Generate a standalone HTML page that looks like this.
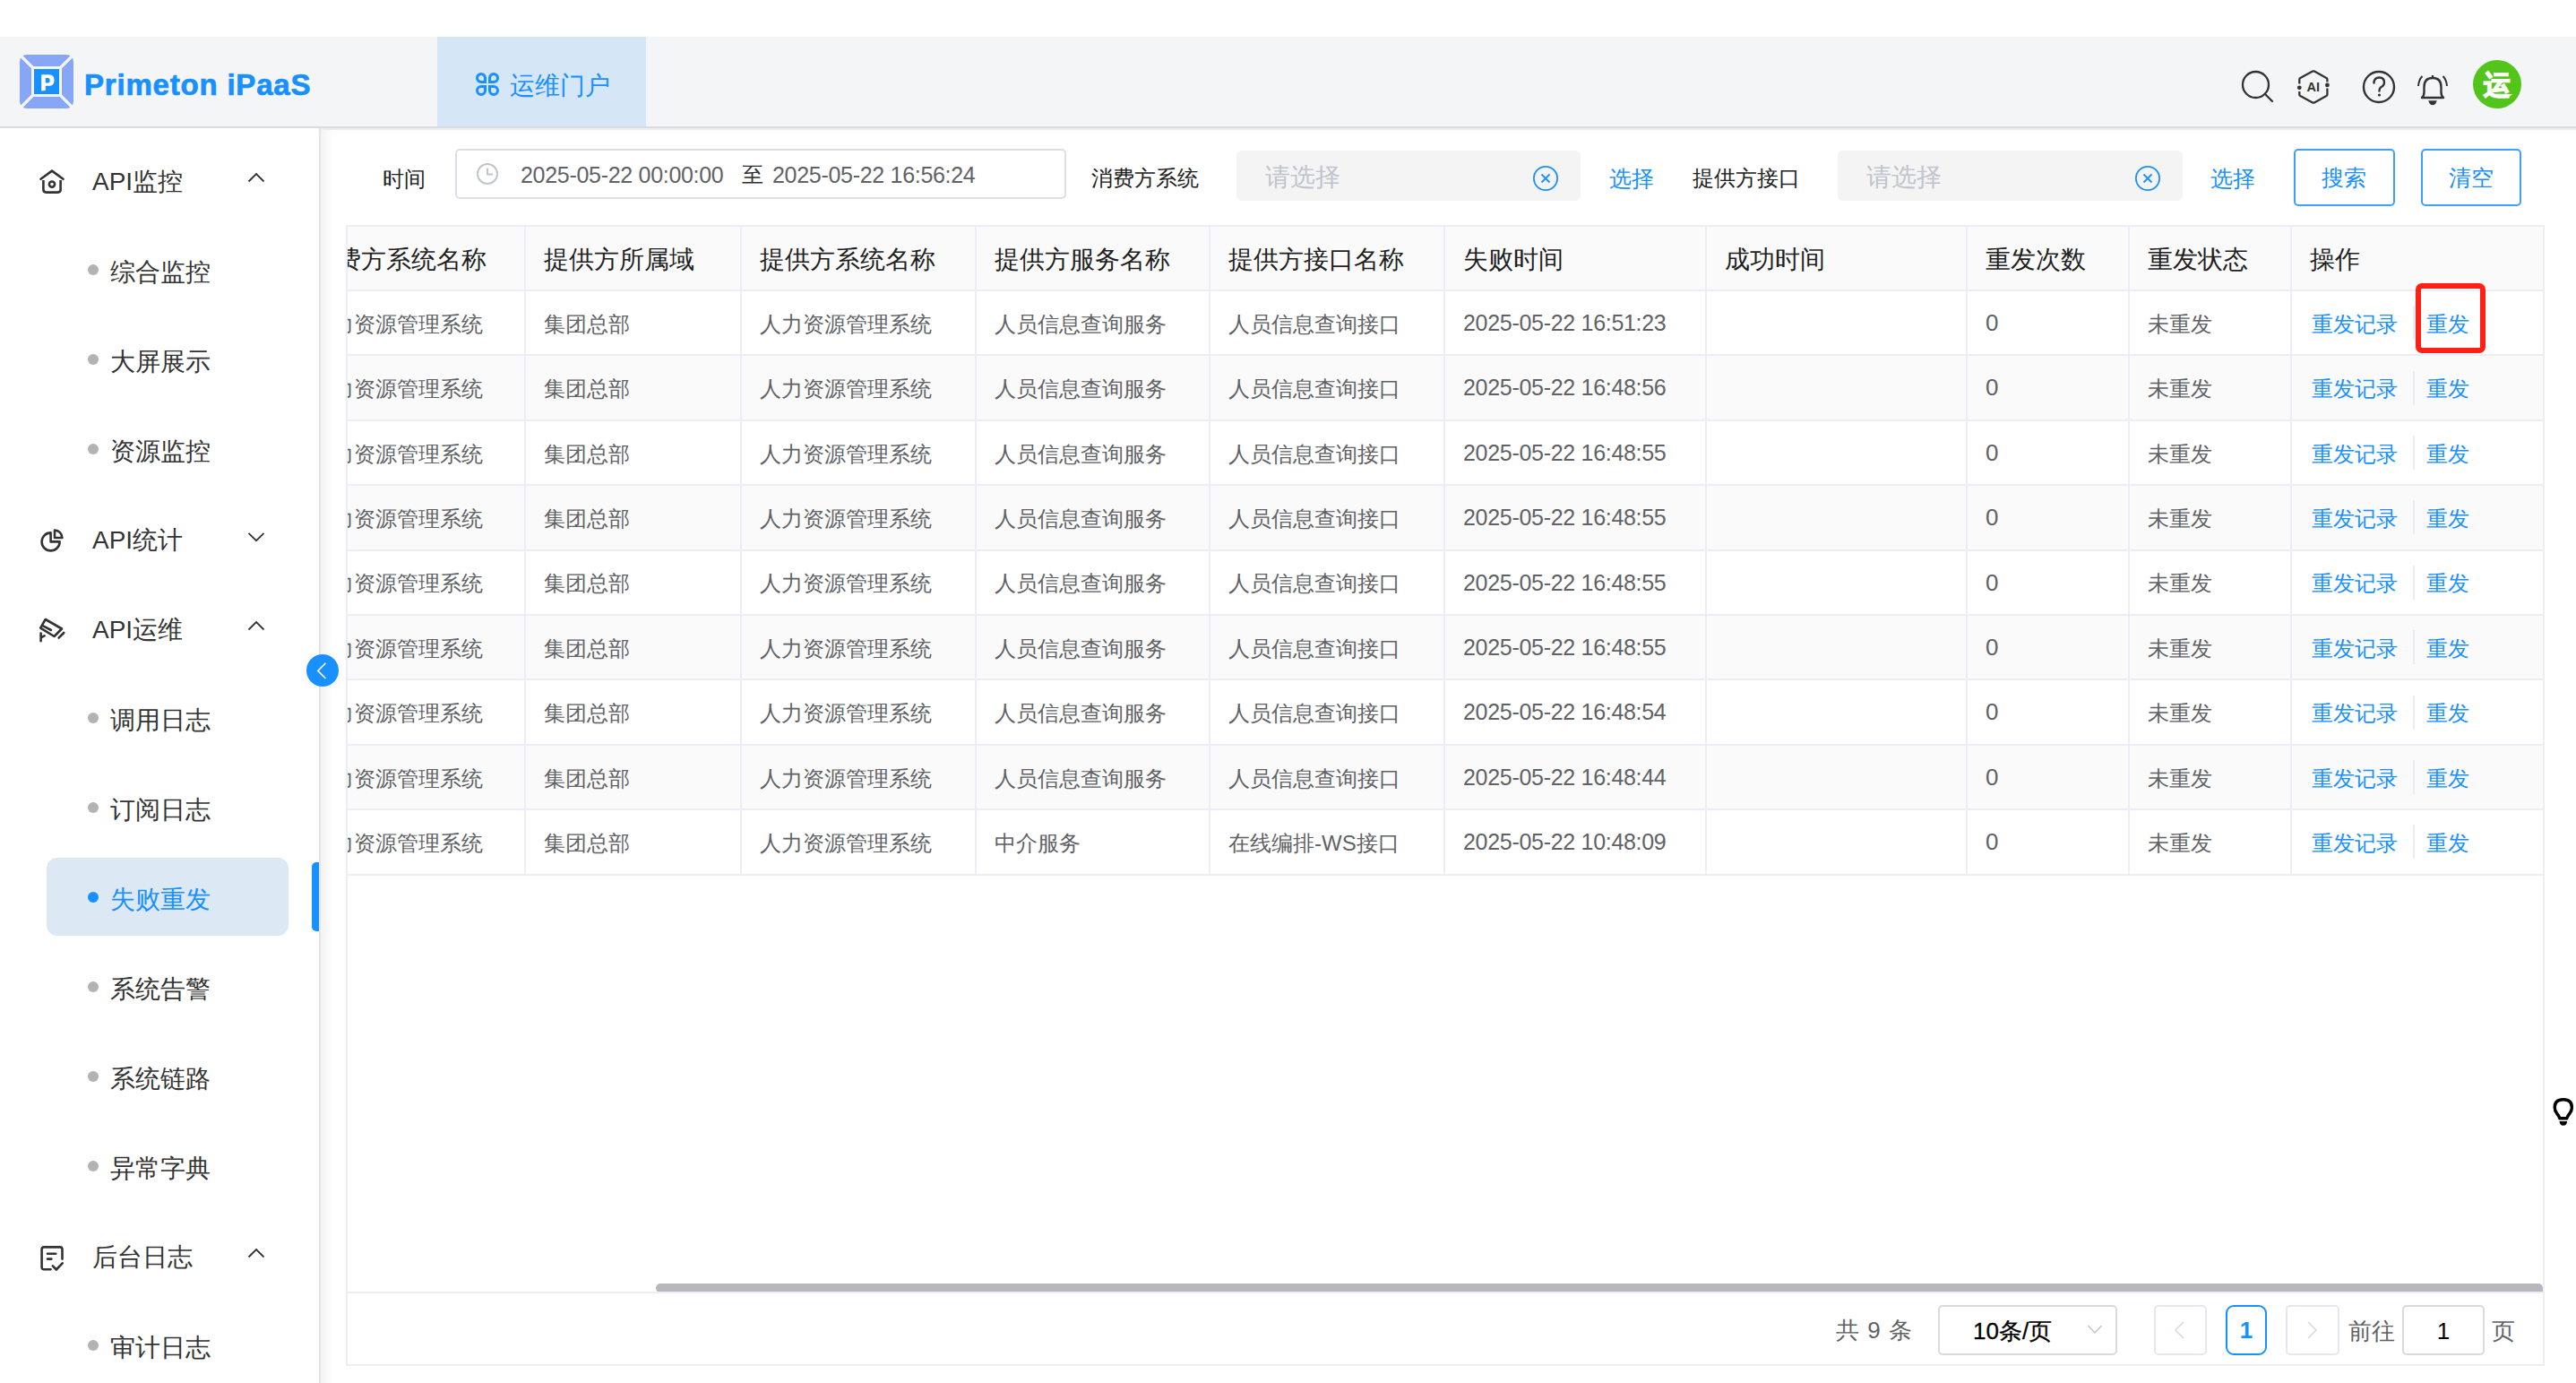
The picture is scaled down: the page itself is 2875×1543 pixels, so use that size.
<!DOCTYPE html>
<html><head><meta charset="utf-8">
<style>
*{box-sizing:border-box;margin:0;padding:0}
html,body{width:2875px;height:1543px;overflow:hidden;background:#fff;font-family:"Liberation Sans",sans-serif;}
body{position:relative}
.a{position:absolute}
.t{position:absolute;white-space:nowrap}
svg{position:absolute;overflow:visible}
</style></head><body>

<!-- HEADER -->
<div class="a" style="left:0;top:41px;width:2875px;height:100px;background:#f4f5f7"></div>
<div class="a" style="left:0;top:141px;width:2875px;height:2px;background:#dcdcdc"></div>
<div class="a" style="left:358px;top:143px;width:2517px;height:2px;background:#e9edf5"></div>

<!-- logo -->
<svg style="left:22px;top:61px" width="60" height="60" viewBox="0 0 60 60">
  <rect x="0" y="0" width="60" height="60" rx="8" fill="#88a6f6"/>
  <rect x="14.5" y="14.5" width="31" height="31" fill="#1890ff" stroke="#f4f5f7" stroke-width="3"/>
  <path d="M0,0 L14,14 M60,0 L46,14 M0,60 L14,46 M60,60 L46,46" stroke="#f4f5f7" stroke-width="3.2"/>
  <path d="M24.2,22.2 H33 Q38.5,22.2 38.5,28.4 Q38.5,34.7 33,34.7 H28.8 V40 L24.2,40.5 Z M28.8,26 V31.4 H32 Q33.7,31.4 33.7,28.7 Q33.7,26 32,26 Z" fill="#fff" fill-rule="evenodd"/>
</svg>
<div class="t" style="left:94px;top:75px;font-size:33px;line-height:40px;font-weight:bold;color:#1890ff;letter-spacing:0.8px;-webkit-text-stroke:0.7px #1890ff">Primeton iPaaS</div>

<!-- tab -->
<div class="a" style="left:488px;top:41px;width:233px;height:100px;background:#d5e6f7"></div>
<svg style="left:531px;top:81px" width="26" height="26" viewBox="0 0 26 26" fill="none" stroke="#1890ff" stroke-width="3">
  <path d="M10.5,10.5 H6 A4.5,4.5 0 1 1 10.5,6 Z"/>
  <path d="M15.5,10.5 V6 A4.5,4.5 0 1 1 20,10.5 Z"/>
  <path d="M10.5,15.5 V20 A4.5,4.5 0 1 1 6,15.5 Z"/>
  <path d="M15.5,15.5 H20 A4.5,4.5 0 1 1 15.5,20 Z"/>
</svg>
<div class="t" style="left:569px;top:76px;font-size:28px;line-height:40px;color:#1890ff">运维门户</div>

<!-- header right icons -->
<svg style="left:2500px;top:77px" width="40" height="40" viewBox="0 0 40 40" fill="none" stroke="#333" stroke-width="2.3">
  <circle cx="17.5" cy="17.5" r="14.5"/>
  <path d="M28,28 L36,36" stroke-linecap="round"/>
</svg>
<svg style="left:2562px;top:77px" width="40" height="40" viewBox="0 0 40 40" fill="none" stroke="#333" stroke-width="2.3" stroke-linejoin="round">
  <path d="M4.3,16.5 V11.5 Q4.3,10.5 5.3,9.9 L19,2.6 Q20,2.1 21,2.6 L34.4,9.9 Q35.4,10.5 35.4,11.5 V14.5"/>
  <path d="M35.4,21.5 V28.5 Q35.4,29.5 34.4,30.1 L21,37.4 Q20,37.9 19,37.4 L5.3,30.1 Q4.3,29.5 4.3,28.5 V25"/>
  <circle cx="4.3" cy="20.8" r="2.4" fill="#333" stroke="none"/>
  <circle cx="35.4" cy="17.9" r="2.4" fill="#333" stroke="none"/>
  <text x="19.8" y="25.2" text-anchor="middle" font-family="Liberation Sans" font-weight="bold" font-size="14.5" fill="#333" stroke="none">AI</text>
</svg>
<svg style="left:2635px;top:77px" width="40" height="40" viewBox="0 0 40 40" fill="none" stroke="#333" stroke-width="2.4">
  <circle cx="20" cy="20" r="17"/>
  <path d="M14.5,15.5 Q14.5,9.5 20.5,9.5 Q26,9.5 26,15 Q26,18.5 22,20.5 Q20.5,21.5 20.5,24.5" stroke-linecap="round"/>
  <circle cx="20.5" cy="29" r="1.6" fill="#333" stroke="none"/>
</svg>
<svg style="left:2695px;top:79px" width="40" height="40" viewBox="0 0 40 40" fill="none" stroke="#333" stroke-width="2.4">
  <path d="M20,5 V7"/>
  <path d="M8,30 Q10.5,28 10.5,24 V18 Q10.5,8 20,8 Q29.5,8 29.5,18 V24 Q29.5,28 32,30 Z" stroke-linejoin="round"/>
  <path d="M17,34.5 H23 Q22,37 20,37 Q18,37 17,34.5Z" fill="#333"/>
  <path d="M4,17 Q4.5,10 8.5,6 M36,17 Q35.5,10 31.5,6" stroke-width="2"/>
</svg>
<div class="a" style="left:2760px;top:67px;width:54px;height:54px;border-radius:50%;background:#52c41a"></div>
<div class="t" style="left:2760px;top:75px;width:54px;text-align:center;font-size:30px;line-height:40px;font-weight:700;color:#fff;-webkit-text-stroke:1.5px #fff">运</div>

<!-- SIDEBAR -->
<div class="a" style="left:356px;top:143px;width:2px;height:1400px;background:#e4e4e4"></div>
<div class="a" style="left:358px;top:145px;width:14px;height:1398px;background:linear-gradient(to right,#f3f3f3,#fff)"></div>


<svg style="left:44px;top:188px" width="28" height="28" viewBox="0 0 28 28" fill="none" stroke="#333" stroke-width="2.6"><path d="M1.5,11.8 L14,2.6 L26.5,11.8" stroke-linejoin="round" stroke-linecap="round"/><path d="M4.4,13 V23.5 Q4.4,26.6 7.5,26.6 H20.5 Q23.6,26.6 23.6,23.5 V13"/><circle cx="14" cy="17.6" r="3.1"/></svg>
<div class="t" style="left:103px;top:183.0px;font-size:28px;line-height:40px;color:#333;">API监控</div>
<svg style="left:277px;top:193px" width="18" height="10" viewBox="0 0 18 10" fill="none" stroke="#333" stroke-width="1.8"><path d="M0.5,9.5 L9,1 L17.5,9.5"/></svg>
<svg style="left:44px;top:588px" width="28" height="28" viewBox="0 0 28 28" fill="none" stroke="#333" stroke-width="2.6"><path d="M12.6,6.4 V16.4 H22.6 A10,10 0 1 1 12.6,6.4 Z" stroke-linejoin="round"/><path d="M17,3.6 A8.4,8.4 0 0 1 25.4,12 H17 Z" stroke-linejoin="round"/></svg>
<div class="t" style="left:103px;top:583.0px;font-size:28px;line-height:40px;color:#333;">API统计</div>
<svg style="left:277px;top:594px" width="18" height="10" viewBox="0 0 18 10" fill="none" stroke="#333" stroke-width="1.8"><path d="M0.5,0.8 L9,9.2 L17.5,0.8"/></svg>
<svg style="left:44px;top:688px" width="28" height="28" viewBox="0 0 28 28" fill="none" stroke="#333" stroke-width="2.6"><path d="M6.7,3 L25,13.5 L16.5,22 L1.2,12.6 Z" stroke-linejoin="round"/><path d="M4.6,10.6 L13,15" stroke-linecap="round"/><path d="M1.6,18.6 V27.2 M1.6,23.4 L5.6,21.4" stroke-linecap="round"/><path d="M21.6,23.6 L27.2,18" stroke-linecap="round"/></svg>
<div class="t" style="left:103px;top:683.0px;font-size:28px;line-height:40px;color:#333;">API运维</div>
<svg style="left:277px;top:693px" width="18" height="10" viewBox="0 0 18 10" fill="none" stroke="#333" stroke-width="1.8"><path d="M0.5,9.5 L9,1 L17.5,9.5"/></svg>
<svg style="left:44px;top:1388px" width="28" height="28" viewBox="0 0 28 28" fill="none" stroke="#333" stroke-width="2.6"><path d="M12.5,28.3 H5.1 Q2.6,28.3 2.6,25.8 V5.9 Q2.6,3.4 5.1,3.4 H23 Q25.5,3.4 25.5,5.9 V16.6" stroke-linecap="round"/><path d="M9,10.8 H18.3 M9,16.6 H13.4" stroke-linecap="round"/><path d="M14.9,24.4 L18.8,28.5 L25.7,21.3" stroke-linecap="round" stroke-linejoin="round"/></svg>
<div class="t" style="left:103px;top:1383.0px;font-size:28px;line-height:40px;color:#333;">后台日志</div>
<svg style="left:277px;top:1393px" width="18" height="10" viewBox="0 0 18 10" fill="none" stroke="#333" stroke-width="1.8"><path d="M0.5,9.5 L9,1 L17.5,9.5"/></svg>
<div class="a" style="left:52px;top:957px;width:270px;height:87px;border-radius:12px;background:#dde8f5"></div>
<div class="a" style="left:348px;top:962px;width:8px;height:77px;border-radius:5px 0 0 5px;background:#1890ff"></div>
<div class="a" style="left:98px;top:295px;width:12px;height:12px;border-radius:50%;background:#b3b3b3"></div>
<div class="t" style="left:123px;top:284.3px;font-size:28px;line-height:40px;color:#333;">综合监控</div>
<div class="a" style="left:98px;top:395px;width:12px;height:12px;border-radius:50%;background:#b3b3b3"></div>
<div class="t" style="left:123px;top:384.3px;font-size:28px;line-height:40px;color:#333;">大屏展示</div>
<div class="a" style="left:98px;top:495px;width:12px;height:12px;border-radius:50%;background:#b3b3b3"></div>
<div class="t" style="left:123px;top:484.3px;font-size:28px;line-height:40px;color:#333;">资源监控</div>
<div class="a" style="left:98px;top:795px;width:12px;height:12px;border-radius:50%;background:#b3b3b3"></div>
<div class="t" style="left:123px;top:784.3px;font-size:28px;line-height:40px;color:#333;">调用日志</div>
<div class="a" style="left:98px;top:895px;width:12px;height:12px;border-radius:50%;background:#b3b3b3"></div>
<div class="t" style="left:123px;top:884.3px;font-size:28px;line-height:40px;color:#333;">订阅日志</div>
<div class="a" style="left:98px;top:995px;width:12px;height:12px;border-radius:50%;background:#1890ff"></div>
<div class="t" style="left:123px;top:984.3px;font-size:28px;line-height:40px;color:#1890ff;">失败重发</div>
<div class="a" style="left:98px;top:1095px;width:12px;height:12px;border-radius:50%;background:#b3b3b3"></div>
<div class="t" style="left:123px;top:1084.3px;font-size:28px;line-height:40px;color:#333;">系统告警</div>
<div class="a" style="left:98px;top:1195px;width:12px;height:12px;border-radius:50%;background:#b3b3b3"></div>
<div class="t" style="left:123px;top:1184.3px;font-size:28px;line-height:40px;color:#333;">系统链路</div>
<div class="a" style="left:98px;top:1295px;width:12px;height:12px;border-radius:50%;background:#b3b3b3"></div>
<div class="t" style="left:123px;top:1284.3px;font-size:28px;line-height:40px;color:#333;">异常字典</div>
<div class="a" style="left:98px;top:1495px;width:12px;height:12px;border-radius:50%;background:#b3b3b3"></div>
<div class="t" style="left:123px;top:1484.3px;font-size:28px;line-height:40px;color:#333;">审计日志</div>
<div class="a" style="left:342px;top:730px;width:36px;height:36px;border-radius:50%;background:#1890ff"></div>
<svg style="left:342px;top:730px" width="36" height="36" viewBox="0 0 36 36" fill="none" stroke="#fff" stroke-width="1.6"><path d="M21.4,9.8 L12.8,18.4 L21.4,27"/></svg>
<div class="t" style="left:427px;top:181.5px;font-size:24px;line-height:36px;color:#222;">时间</div>
<div class="a" style="left:508px;top:166px;width:682px;height:56px;border:2px solid #dcdfe6;border-radius:5px;background:#fff"></div>
<svg style="left:532px;top:182px" width="24" height="24" viewBox="0 0 24 24" fill="none" stroke="#c0c4cc" stroke-width="2"><circle cx="12" cy="12" r="11"/><path d="M12,5.5 V12.5 H18"/></svg>
<div class="t" style="left:581px;top:176.5px;font-size:25px;line-height:37px;color:#606266;letter-spacing:-0.3px">2025-05-22 00:00:00</div>
<div class="t" style="left:828px;top:177.0px;font-size:24px;line-height:36px;color:#303133;">至</div>
<div class="t" style="left:862px;top:176.5px;font-size:25px;line-height:37px;color:#606266;letter-spacing:-0.3px">2025-05-22 16:56:24</div>
<div class="t" style="left:1218px;top:181.0px;font-size:24px;line-height:36px;color:#222;">消费方系统</div>
<div class="a" style="left:1380px;top:168px;width:384px;height:56px;border-radius:6px;background:#f4f4f5"></div>
<div class="t" style="left:1412px;top:178.0px;font-size:28px;line-height:40px;color:#c0c4cc;">请选择</div>
<svg style="left:1710px;top:184px" width="30" height="30" viewBox="0 0 30 30" fill="none" stroke="#1890ff" stroke-width="1.8"><circle cx="15" cy="15" r="13.1"/><path d="M10.5,10.5 L19.5,19.5 M19.5,10.5 L10.5,19.5"/></svg>
<div class="t" style="left:1796px;top:180.5px;font-size:25px;line-height:37px;color:#1890ff;">选择</div>
<div class="t" style="left:1889px;top:181.0px;font-size:24px;line-height:36px;color:#222;">提供方接口</div>
<div class="a" style="left:2051px;top:168px;width:385px;height:56px;border-radius:6px;background:#f4f4f5"></div>
<div class="t" style="left:2083px;top:178.0px;font-size:28px;line-height:40px;color:#c0c4cc;">请选择</div>
<svg style="left:2382px;top:184px" width="30" height="30" viewBox="0 0 30 30" fill="none" stroke="#1890ff" stroke-width="1.8"><circle cx="15" cy="15" r="13.1"/><path d="M10.5,10.5 L19.5,19.5 M19.5,10.5 L10.5,19.5"/></svg>
<div class="t" style="left:2467px;top:180.5px;font-size:25px;line-height:37px;color:#1890ff;">选择</div>
<div class="a" style="left:2560px;top:166px;width:113px;height:64px;border:2px solid #409eff;border-radius:5px;background:#fff"></div>
<div class="t" style="left:2560px;top:178px;width:112px;text-align:center;font-size:25px;line-height:40px;color:#1890ff">搜索</div>
<div class="a" style="left:2702px;top:166px;width:112px;height:64px;border:2px solid #409eff;border-radius:5px;background:#fff"></div>
<div class="t" style="left:2702px;top:178px;width:112px;text-align:center;font-size:25px;line-height:40px;color:#1890ff">清空</div>
<div class="a" style="left:386px;top:251px;width:2454px;height:1273px;border:2px solid #ebeef5"></div>
<div class="a" style="left:388px;top:253px;width:2450px;height:71px;background:#fafafa"></div>
<div class="a" style="left:388px;top:396.4px;width:2450px;height:72.4px;background:#fafafa"></div>
<div class="a" style="left:388px;top:541.2px;width:2450px;height:72.4px;background:#fafafa"></div>
<div class="a" style="left:388px;top:686.0px;width:2450px;height:72.4px;background:#fafafa"></div>
<div class="a" style="left:388px;top:830.8px;width:2450px;height:72.4px;background:#fafafa"></div>
<div class="a" style="left:388px;top:323px;width:2450px;height:2px;background:#ebeef5"></div>
<div class="a" style="left:388px;top:395px;width:2450px;height:2px;background:#ebeef5"></div>
<div class="a" style="left:388px;top:468px;width:2450px;height:2px;background:#ebeef5"></div>
<div class="a" style="left:388px;top:540px;width:2450px;height:2px;background:#ebeef5"></div>
<div class="a" style="left:388px;top:613px;width:2450px;height:2px;background:#ebeef5"></div>
<div class="a" style="left:388px;top:685px;width:2450px;height:2px;background:#ebeef5"></div>
<div class="a" style="left:388px;top:757px;width:2450px;height:2px;background:#ebeef5"></div>
<div class="a" style="left:388px;top:830px;width:2450px;height:2px;background:#ebeef5"></div>
<div class="a" style="left:388px;top:902px;width:2450px;height:2px;background:#ebeef5"></div>
<div class="a" style="left:388px;top:975px;width:2450px;height:2px;background:#ebeef5"></div>
<div class="a" style="left:585px;top:253px;width:2px;height:723px;background:#ebeef5"></div>
<div class="a" style="left:826px;top:253px;width:2px;height:723px;background:#ebeef5"></div>
<div class="a" style="left:1088px;top:253px;width:2px;height:723px;background:#ebeef5"></div>
<div class="a" style="left:1349px;top:253px;width:2px;height:723px;background:#ebeef5"></div>
<div class="a" style="left:1611px;top:253px;width:2px;height:723px;background:#ebeef5"></div>
<div class="a" style="left:1903px;top:253px;width:2px;height:723px;background:#ebeef5"></div>
<div class="a" style="left:2194px;top:253px;width:2px;height:723px;background:#ebeef5"></div>
<div class="a" style="left:2375px;top:253px;width:2px;height:723px;background:#ebeef5"></div>
<div class="a" style="left:2556px;top:253px;width:2px;height:723px;background:#ebeef5"></div>
<div class="a" style="left:388px;top:253px;width:196px;height:725px;overflow:hidden">
<div class="t" style="left:-41px;top:17.0px;font-size:28px;line-height:40px;color:#1f1f1f">消费方系统名称</div>
<div class="t" style="left:-41px;top:90.7px;font-size:24px;line-height:36px;color:#606266">人力资源管理系统</div>
<div class="t" style="left:-41px;top:163.1px;font-size:24px;line-height:36px;color:#606266">人力资源管理系统</div>
<div class="t" style="left:-41px;top:235.5px;font-size:24px;line-height:36px;color:#606266">人力资源管理系统</div>
<div class="t" style="left:-41px;top:307.9px;font-size:24px;line-height:36px;color:#606266">人力资源管理系统</div>
<div class="t" style="left:-41px;top:380.3px;font-size:24px;line-height:36px;color:#606266">人力资源管理系统</div>
<div class="t" style="left:-41px;top:452.7px;font-size:24px;line-height:36px;color:#606266">人力资源管理系统</div>
<div class="t" style="left:-41px;top:525.1px;font-size:24px;line-height:36px;color:#606266">人力资源管理系统</div>
<div class="t" style="left:-41px;top:597.5px;font-size:24px;line-height:36px;color:#606266">人力资源管理系统</div>
<div class="t" style="left:-41px;top:669.9px;font-size:24px;line-height:36px;color:#606266">人力资源管理系统</div>
</div>
<div class="t" style="left:607px;top:270.0px;font-size:28px;line-height:40px;color:#1f1f1f;">提供方所属域</div>
<div class="t" style="left:848px;top:270.0px;font-size:28px;line-height:40px;color:#1f1f1f;">提供方系统名称</div>
<div class="t" style="left:1110px;top:270.0px;font-size:28px;line-height:40px;color:#1f1f1f;">提供方服务名称</div>
<div class="t" style="left:1371px;top:270.0px;font-size:28px;line-height:40px;color:#1f1f1f;">提供方接口名称</div>
<div class="t" style="left:1633px;top:270.0px;font-size:28px;line-height:40px;color:#1f1f1f;">失败时间</div>
<div class="t" style="left:1925px;top:270.0px;font-size:28px;line-height:40px;color:#1f1f1f;">成功时间</div>
<div class="t" style="left:2216px;top:270.0px;font-size:28px;line-height:40px;color:#1f1f1f;">重发次数</div>
<div class="t" style="left:2397px;top:270.0px;font-size:28px;line-height:40px;color:#1f1f1f;">重发状态</div>
<div class="t" style="left:2578px;top:270.0px;font-size:28px;line-height:40px;color:#1f1f1f;">操作</div>
<div class="t" style="left:607px;top:343.7px;font-size:24px;line-height:36px;color:#606266;">集团总部</div>
<div class="t" style="left:848px;top:343.7px;font-size:24px;line-height:36px;color:#606266;">人力资源管理系统</div>
<div class="t" style="left:1110px;top:343.7px;font-size:24px;line-height:36px;color:#606266;">人员信息查询服务</div>
<div class="t" style="left:1371px;top:343.7px;font-size:24px;line-height:36px;color:#606266;">人员信息查询接口</div>
<div class="t" style="left:1633px;top:342.0px;font-size:25px;line-height:36px;color:#606266;letter-spacing:-0.3px">2025-05-22 16:51:23</div>
<div class="t" style="left:2216px;top:342.0px;font-size:26px;line-height:36px;color:#606266;">0</div>
<div class="t" style="left:2397px;top:343.7px;font-size:24px;line-height:36px;color:#606266;">未重发</div>
<div class="t" style="left:2580px;top:343.7px;font-size:24px;line-height:36px;color:#1890ff;">重发记录</div>
<div class="a" style="left:2693px;top:341px;width:2px;height:38px;background:#eaecf1"></div>
<div class="t" style="left:2708px;top:343.7px;font-size:24px;line-height:36px;color:#1890ff;">重发</div>
<div class="t" style="left:607px;top:416.1px;font-size:24px;line-height:36px;color:#606266;">集团总部</div>
<div class="t" style="left:848px;top:416.1px;font-size:24px;line-height:36px;color:#606266;">人力资源管理系统</div>
<div class="t" style="left:1110px;top:416.1px;font-size:24px;line-height:36px;color:#606266;">人员信息查询服务</div>
<div class="t" style="left:1371px;top:416.1px;font-size:24px;line-height:36px;color:#606266;">人员信息查询接口</div>
<div class="t" style="left:1633px;top:414.4px;font-size:25px;line-height:36px;color:#606266;letter-spacing:-0.3px">2025-05-22 16:48:56</div>
<div class="t" style="left:2216px;top:414.4px;font-size:26px;line-height:36px;color:#606266;">0</div>
<div class="t" style="left:2397px;top:416.1px;font-size:24px;line-height:36px;color:#606266;">未重发</div>
<div class="t" style="left:2580px;top:416.1px;font-size:24px;line-height:36px;color:#1890ff;">重发记录</div>
<div class="a" style="left:2693px;top:414px;width:2px;height:38px;background:#eaecf1"></div>
<div class="t" style="left:2708px;top:416.1px;font-size:24px;line-height:36px;color:#1890ff;">重发</div>
<div class="t" style="left:607px;top:488.5px;font-size:24px;line-height:36px;color:#606266;">集团总部</div>
<div class="t" style="left:848px;top:488.5px;font-size:24px;line-height:36px;color:#606266;">人力资源管理系统</div>
<div class="t" style="left:1110px;top:488.5px;font-size:24px;line-height:36px;color:#606266;">人员信息查询服务</div>
<div class="t" style="left:1371px;top:488.5px;font-size:24px;line-height:36px;color:#606266;">人员信息查询接口</div>
<div class="t" style="left:1633px;top:486.8px;font-size:25px;line-height:36px;color:#606266;letter-spacing:-0.3px">2025-05-22 16:48:55</div>
<div class="t" style="left:2216px;top:486.8px;font-size:26px;line-height:36px;color:#606266;">0</div>
<div class="t" style="left:2397px;top:488.5px;font-size:24px;line-height:36px;color:#606266;">未重发</div>
<div class="t" style="left:2580px;top:488.5px;font-size:24px;line-height:36px;color:#1890ff;">重发记录</div>
<div class="a" style="left:2693px;top:486px;width:2px;height:38px;background:#eaecf1"></div>
<div class="t" style="left:2708px;top:488.5px;font-size:24px;line-height:36px;color:#1890ff;">重发</div>
<div class="t" style="left:607px;top:560.9px;font-size:24px;line-height:36px;color:#606266;">集团总部</div>
<div class="t" style="left:848px;top:560.9px;font-size:24px;line-height:36px;color:#606266;">人力资源管理系统</div>
<div class="t" style="left:1110px;top:560.9px;font-size:24px;line-height:36px;color:#606266;">人员信息查询服务</div>
<div class="t" style="left:1371px;top:560.9px;font-size:24px;line-height:36px;color:#606266;">人员信息查询接口</div>
<div class="t" style="left:1633px;top:559.2px;font-size:25px;line-height:36px;color:#606266;letter-spacing:-0.3px">2025-05-22 16:48:55</div>
<div class="t" style="left:2216px;top:559.2px;font-size:26px;line-height:36px;color:#606266;">0</div>
<div class="t" style="left:2397px;top:560.9px;font-size:24px;line-height:36px;color:#606266;">未重发</div>
<div class="t" style="left:2580px;top:560.9px;font-size:24px;line-height:36px;color:#1890ff;">重发记录</div>
<div class="a" style="left:2693px;top:558px;width:2px;height:38px;background:#eaecf1"></div>
<div class="t" style="left:2708px;top:560.9px;font-size:24px;line-height:36px;color:#1890ff;">重发</div>
<div class="t" style="left:607px;top:633.3px;font-size:24px;line-height:36px;color:#606266;">集团总部</div>
<div class="t" style="left:848px;top:633.3px;font-size:24px;line-height:36px;color:#606266;">人力资源管理系统</div>
<div class="t" style="left:1110px;top:633.3px;font-size:24px;line-height:36px;color:#606266;">人员信息查询服务</div>
<div class="t" style="left:1371px;top:633.3px;font-size:24px;line-height:36px;color:#606266;">人员信息查询接口</div>
<div class="t" style="left:1633px;top:631.6px;font-size:25px;line-height:36px;color:#606266;letter-spacing:-0.3px">2025-05-22 16:48:55</div>
<div class="t" style="left:2216px;top:631.6px;font-size:26px;line-height:36px;color:#606266;">0</div>
<div class="t" style="left:2397px;top:633.3px;font-size:24px;line-height:36px;color:#606266;">未重发</div>
<div class="t" style="left:2580px;top:633.3px;font-size:24px;line-height:36px;color:#1890ff;">重发记录</div>
<div class="a" style="left:2693px;top:631px;width:2px;height:38px;background:#eaecf1"></div>
<div class="t" style="left:2708px;top:633.3px;font-size:24px;line-height:36px;color:#1890ff;">重发</div>
<div class="t" style="left:607px;top:705.7px;font-size:24px;line-height:36px;color:#606266;">集团总部</div>
<div class="t" style="left:848px;top:705.7px;font-size:24px;line-height:36px;color:#606266;">人力资源管理系统</div>
<div class="t" style="left:1110px;top:705.7px;font-size:24px;line-height:36px;color:#606266;">人员信息查询服务</div>
<div class="t" style="left:1371px;top:705.7px;font-size:24px;line-height:36px;color:#606266;">人员信息查询接口</div>
<div class="t" style="left:1633px;top:704.0px;font-size:25px;line-height:36px;color:#606266;letter-spacing:-0.3px">2025-05-22 16:48:55</div>
<div class="t" style="left:2216px;top:704.0px;font-size:26px;line-height:36px;color:#606266;">0</div>
<div class="t" style="left:2397px;top:705.7px;font-size:24px;line-height:36px;color:#606266;">未重发</div>
<div class="t" style="left:2580px;top:705.7px;font-size:24px;line-height:36px;color:#1890ff;">重发记录</div>
<div class="a" style="left:2693px;top:703px;width:2px;height:38px;background:#eaecf1"></div>
<div class="t" style="left:2708px;top:705.7px;font-size:24px;line-height:36px;color:#1890ff;">重发</div>
<div class="t" style="left:607px;top:778.1px;font-size:24px;line-height:36px;color:#606266;">集团总部</div>
<div class="t" style="left:848px;top:778.1px;font-size:24px;line-height:36px;color:#606266;">人力资源管理系统</div>
<div class="t" style="left:1110px;top:778.1px;font-size:24px;line-height:36px;color:#606266;">人员信息查询服务</div>
<div class="t" style="left:1371px;top:778.1px;font-size:24px;line-height:36px;color:#606266;">人员信息查询接口</div>
<div class="t" style="left:1633px;top:776.4px;font-size:25px;line-height:36px;color:#606266;letter-spacing:-0.3px">2025-05-22 16:48:54</div>
<div class="t" style="left:2216px;top:776.4px;font-size:26px;line-height:36px;color:#606266;">0</div>
<div class="t" style="left:2397px;top:778.1px;font-size:24px;line-height:36px;color:#606266;">未重发</div>
<div class="t" style="left:2580px;top:778.1px;font-size:24px;line-height:36px;color:#1890ff;">重发记录</div>
<div class="a" style="left:2693px;top:776px;width:2px;height:38px;background:#eaecf1"></div>
<div class="t" style="left:2708px;top:778.1px;font-size:24px;line-height:36px;color:#1890ff;">重发</div>
<div class="t" style="left:607px;top:850.5px;font-size:24px;line-height:36px;color:#606266;">集团总部</div>
<div class="t" style="left:848px;top:850.5px;font-size:24px;line-height:36px;color:#606266;">人力资源管理系统</div>
<div class="t" style="left:1110px;top:850.5px;font-size:24px;line-height:36px;color:#606266;">人员信息查询服务</div>
<div class="t" style="left:1371px;top:850.5px;font-size:24px;line-height:36px;color:#606266;">人员信息查询接口</div>
<div class="t" style="left:1633px;top:848.8px;font-size:25px;line-height:36px;color:#606266;letter-spacing:-0.3px">2025-05-22 16:48:44</div>
<div class="t" style="left:2216px;top:848.8px;font-size:26px;line-height:36px;color:#606266;">0</div>
<div class="t" style="left:2397px;top:850.5px;font-size:24px;line-height:36px;color:#606266;">未重发</div>
<div class="t" style="left:2580px;top:850.5px;font-size:24px;line-height:36px;color:#1890ff;">重发记录</div>
<div class="a" style="left:2693px;top:848px;width:2px;height:38px;background:#eaecf1"></div>
<div class="t" style="left:2708px;top:850.5px;font-size:24px;line-height:36px;color:#1890ff;">重发</div>
<div class="t" style="left:607px;top:922.9px;font-size:24px;line-height:36px;color:#606266;">集团总部</div>
<div class="t" style="left:848px;top:922.9px;font-size:24px;line-height:36px;color:#606266;">人力资源管理系统</div>
<div class="t" style="left:1110px;top:922.9px;font-size:24px;line-height:36px;color:#606266;">中介服务</div>
<div class="t" style="left:1371px;top:922.9px;font-size:24px;line-height:36px;color:#606266;">在线编排-WS接口</div>
<div class="t" style="left:1633px;top:921.2px;font-size:25px;line-height:36px;color:#606266;letter-spacing:-0.3px">2025-05-22 10:48:09</div>
<div class="t" style="left:2216px;top:921.2px;font-size:26px;line-height:36px;color:#606266;">0</div>
<div class="t" style="left:2397px;top:922.9px;font-size:24px;line-height:36px;color:#606266;">未重发</div>
<div class="t" style="left:2580px;top:922.9px;font-size:24px;line-height:36px;color:#1890ff;">重发记录</div>
<div class="a" style="left:2693px;top:920px;width:2px;height:38px;background:#eaecf1"></div>
<div class="t" style="left:2708px;top:922.9px;font-size:24px;line-height:36px;color:#1890ff;">重发</div>
<div class="a" style="left:2696px;top:316px;width:78px;height:78px;border:6px solid #ff1f14;border-radius:7px"></div>
<div class="a" style="left:732px;top:1432px;width:2106px;height:10px;border-radius:6px 6px 0 6px;background:#b6b8be"></div>
<div class="a" style="left:388px;top:1441px;width:2450px;height:2px;background:#ebeef5"></div>
<div class="t" style="left:2049px;top:1466.0px;font-size:26px;line-height:36px;color:#606266;word-spacing:2px">共 9 条</div>
<div class="a" style="left:2163px;top:1456px;width:200px;height:56px;border:2px solid #dadada;border-radius:5px"></div>
<div class="t" style="left:2202px;top:1467.0px;font-size:26px;line-height:36px;color:#000;-webkit-text-stroke:0.3px #000">10条/页</div>
<svg style="left:2330px;top:1478px" width="16" height="10" viewBox="0 0 16 10" fill="none" stroke="#c0c4cc" stroke-width="1.5"><path d="M0.5,1 L8,9 L15.5,1"/></svg>
<div class="a" style="left:2404px;top:1456px;width:59px;height:56px;border:2px solid #e4e7ed;border-radius:5px"></div>
<svg style="left:2426px;top:1474px" width="14" height="20" viewBox="0 0 14 20" fill="none" stroke="#d5d9e0" stroke-width="1.5"><path d="M11,1 L2,10 L11,19"/></svg>
<div class="a" style="left:2484px;top:1456px;width:46px;height:56px;border:2px solid #1890ff;border-radius:9px"></div>
<div class="t" style="left:2484px;top:1466px;width:46px;text-align:center;font-size:26px;line-height:36px;font-weight:bold;color:#1890ff">1</div>
<div class="a" style="left:2551px;top:1456px;width:60px;height:56px;border:2px solid #e4e7ed;border-radius:5px"></div>
<svg style="left:2573px;top:1474px" width="14" height="20" viewBox="0 0 14 20" fill="none" stroke="#d5d9e0" stroke-width="1.5"><path d="M3,1 L12,10 L3,19"/></svg>
<div class="t" style="left:2621px;top:1467.0px;font-size:26px;line-height:36px;color:#606266;">前往</div>
<div class="a" style="left:2681px;top:1456px;width:92px;height:56px;border:2px solid #dadada;border-radius:5px"></div>
<div class="t" style="left:2681px;top:1467px;width:92px;text-align:center;font-size:26px;line-height:36px;color:#000">1</div>
<div class="t" style="left:2781px;top:1467.0px;font-size:26px;line-height:36px;color:#606266;">页</div>
<svg style="left:2849px;top:1224px" width="24" height="32" viewBox="0 0 24 32" fill="none" stroke="#000" stroke-width="3.4"><path d="M7.8,23.7 Q6.8,20.5 4.6,18.2 Q2.2,15.5 2.2,11.6 Q2.2,2.8 11.8,2.8 Q21.4,2.8 21.4,11.6 Q21.4,15.5 19,18.2 Q16.8,20.5 15.8,23.7 Z" stroke-linejoin="round"/><path d="M7.6,27 H16 Q16,31.8 11.8,31.8 Q7.6,31.8 7.6,27Z" fill="#000" stroke="none"/></svg>
</body></html>
